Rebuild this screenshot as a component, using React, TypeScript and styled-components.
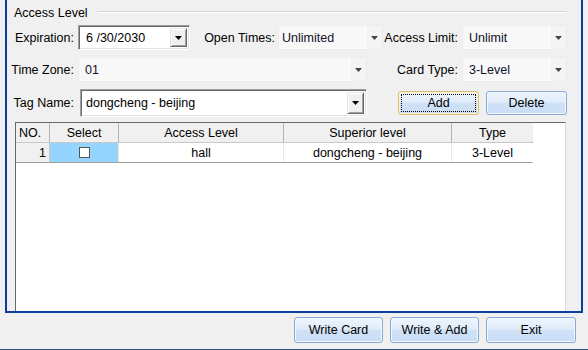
import React from 'react';
import styled, { createGlobalStyle } from 'styled-components';

const Global = createGlobalStyle`
  html, body { margin: 0; padding: 0; background: #f0f0f0; }
  body { font-family: "Liberation Sans", Arial, sans-serif; font-size: 12.5px; color: #000; }
  * { box-sizing: border-box; }
`;

const Window = styled.div`
  width: 588px;
  height: 350px;
  background: #f0f0f0;
  display: flex;
  flex-direction: column;
  border-bottom: 1px solid #2c5a7c;
  overflow: hidden;
`;

const Panel = styled.div`
  margin-left: 5px;
  width: 578px;
  height: 313px;
  border: 2px solid #0f3c9f;
  border-top: none;
  display: flex;
  flex-direction: column;
`;

const GroupHeader = styled.div`
  display: flex;
  align-items: flex-start;
  padding: 6px 15px 0 7px;
  height: 20px;
`;

const GroupTitle = styled.span`
  line-height: 14px;
  white-space: nowrap;
`;

const GroupLine = styled.div`
  flex: 1;
  height: 1px;
  margin: 5px 0 0 10px;
  background: #d5d5d5;
  box-shadow: 0 1px 0 #fff;
`;

const Form = styled.div`
  display: flex;
  flex-direction: column;
  margin-top: 5px;
`;

const Row = styled.div<{ $h: number; $mt?: number }>`
  display: flex;
  align-items: center;
  height: ${p => p.$h}px;
  margin-top: ${p => p.$mt ?? 0}px;
`;

const Label = styled.span<{ $w: number; $gap: number }>`
  width: ${p => p.$w}px;
  margin-right: ${p => p.$gap}px;
  text-align: right;
  white-space: nowrap;
`;

const Sunken = styled.div<{ $w: number; $h: number }>`
  width: ${p => p.$w}px;
  height: ${p => p.$h}px;
  background: #fff;
  border: 1px solid;
  border-color: #a0a0a0 #fff #fff #a0a0a0;
  box-shadow: inset 1px 1px #696969, inset -1px -1px #e3e3e3;
  display: flex;
  align-items: stretch;
  padding: 2px;
`;

const FieldText = styled.span<{ $pad: number }>`
  flex: 1;
  display: flex;
  align-items: center;
  padding-left: ${p => p.$pad}px;
  white-space: nowrap;
`;

const RaisedArrow = styled.span`
  width: 17px;
  background: #f0f0f0;
  border: 1px solid;
  border-color: #e3e3e3 #696969 #696969 #e3e3e3;
  box-shadow: inset 1px 1px #fff, inset -1px -1px #a0a0a0;
  display: flex;
  align-items: center;
  justify-content: center;
`;

const Flat = styled.div<{ $w: number }>`
  width: ${p => p.$w}px;
  height: 25px;
  background: #f8f8f8;
  border: 1px solid #ececec;
  display: flex;
  align-items: stretch;
`;

const FlatText = styled.span<{ $pad: number }>`
  flex: 1;
  display: flex;
  align-items: center;
  padding-left: ${p => p.$pad}px;
  color: #10102a;
  white-space: nowrap;
`;

const FlatArrow = styled.span`
  width: 17px;
  border-left: 1px solid #fdfdfd;
  background: #f4f4f4;
  display: flex;
  align-items: center;
  justify-content: center;
`;

const Button = styled.button<{ $w: number; $focus?: boolean }>`
  width: ${p => p.$w}px;
  height: ${p => (p.$focus !== undefined ? 24 : 26)}px;
  font-family: "Liberation Sans", Arial, sans-serif;
  font-size: 12.5px;
  color: #000;
  border: 1px solid ${p => (p.$focus ? '#dcc07a' : '#86a9d5')};
  border-radius: 3px;
  background: linear-gradient(#eef5fd 0%, #e0ecfa 45%, #cfe1f6 52%, #c9def6 100%);
  box-shadow: inset 0 0 0 1px ${p => (p.$focus ? '#fbf1cf' : '#f4f8fe')};
  padding: 0;
  position: relative;
  cursor: default;
  &::after {
    content: '';
    display: ${p => (p.$focus ? 'block' : 'none')};
    position: absolute;
    inset: 2px;
    border: 1px dotted #000;
  }
`;

const Spacer = styled.div<{ $w: number }>`
  width: ${p => p.$w}px;
  flex: none;
`;

const Grid = styled.div`
  margin: 5px 0 0 8px;
  width: 551px;
  flex: 1;
  background: #fff;
  border-top: 1px solid #696969;
  border-left: 1px solid #696969;
  border-right: 1px solid #dcdcdc;
  display: flex;
  flex-direction: column;
`;

const cols = '34px 69px 165px 168px 81px';

const HeadRow = styled.div`
  display: grid;
  grid-template-columns: ${cols};
  width: 517px;
  height: 20px;
  border-right: 1px solid #646464;
  border-bottom: 1px solid #c8c8c8;
`;

const HeadCell = styled.div<{ $align?: string }>`
  background: #f0f0f0;
  border-right: 1px solid #b4b4b4;
  display: flex;
  align-items: center;
  justify-content: ${p => p.$align ?? 'center'};
  padding: 0 3px;
  white-space: nowrap;
  &:last-child { border-right: none; }
`;

const DataRow = styled.div`
  display: grid;
  grid-template-columns: ${cols};
  width: 517px;
  height: 20px;
  border-bottom: 1px solid #a0a0a0;
  border-right: 1px solid #e6dfc3;
`;

const Cell = styled.div<{ $bg?: string; $align?: string; $line?: string }>`
  background: ${p => p.$bg ?? '#fff'};
  border-right: 1px solid ${p => p.$line ?? '#efe8cc'};
  display: flex;
  align-items: center;
  justify-content: ${p => p.$align ?? 'center'};
  padding: 0 3px;
  white-space: nowrap;
  &:last-child { border-right: none; }
`;

const Check = styled.span`
  width: 11px;
  height: 11px;
  background: #fff;
  border: 1px solid #555;
`;

const BottomBar = styled.div`
  display: flex;
  justify-content: flex-end;
  gap: 7px;
  padding: 4px 12px 0 0;
`;

const Arrow = ({ color = '#000' }: { color?: string }) => (
  <svg width="7" height="4" viewBox="0 0 7 4">
    <path d="M0 0H7L3.5 4Z" fill={color} />
  </svg>
);

export default function App() {
  return (
    <>
      <Global />
      <Window>
        <Panel>
          <GroupHeader>
            <GroupTitle>Access Level</GroupTitle>
            <GroupLine />
          </GroupHeader>
          <Form>
            <Row $h={25}>
              <Label $w={67} $gap={4}>Expiration:</Label>
              <Sunken $w={112} $h={25}>
                <FieldText $pad={5}>6 /30/2030</FieldText>
                <RaisedArrow><Arrow /></RaisedArrow>
              </Sunken>
              <Label $w={85} $gap={3}>Open Times:</Label>
              <Flat $w={105}>
                <FlatText $pad={3}>Unlimited</FlatText>
                <FlatArrow><Arrow color="#444" /></FlatArrow>
              </Flat>
              <Label $w={75} $gap={4}>Access Limit:</Label>
              <Flat $w={105}>
                <FlatText $pad={6}>Unlimit</FlatText>
                <FlatArrow><Arrow color="#444" /></FlatArrow>
              </Flat>
            </Row>
            <Row $h={25} $mt={7}>
              <Label $w={67} $gap={4}>Time Zone:</Label>
              <Flat $w={289}>
                <FlatText $pad={6}>01</FlatText>
                <FlatArrow><Arrow color="#444" /></FlatArrow>
              </Flat>
              <Label $w={91} $gap={4}>Card Type:</Label>
              <Flat $w={105}>
                <FlatText $pad={6}>3-Level</FlatText>
                <FlatArrow><Arrow color="#444" /></FlatArrow>
              </Flat>
            </Row>
            <Row $h={29} $mt={6}>
              <Label $w={67} $gap={6}>Tag Name:</Label>
              <Sunken $w={287} $h={28}>
                <FieldText $pad={3}>dongcheng - beijing</FieldText>
                <RaisedArrow><Arrow /></RaisedArrow>
              </Sunken>
              <Spacer $w={31} />
              <Button $w={81} $focus>Add</Button>
              <Spacer $w={7} />
              <Button $w={81} $focus={false}>Delete</Button>
            </Row>
          </Form>
          <Grid>
            <HeadRow>
              <HeadCell $align="flex-start">NO.</HeadCell>
              <HeadCell>Select</HeadCell>
              <HeadCell>Access Level</HeadCell>
              <HeadCell>Superior level</HeadCell>
              <HeadCell>Type</HeadCell>
            </HeadRow>
            <DataRow>
              <Cell $bg="#f0f0f0" $align="flex-end" $line="#c8c8c8">1</Cell>
              <Cell $bg="#95d5fd"><Check /></Cell>
              <Cell>hall</Cell>
              <Cell>dongcheng - beijing</Cell>
              <Cell>3-Level</Cell>
            </DataRow>
          </Grid>
        </Panel>
        <BottomBar>
          <Button $w={89}>Write Card</Button>
          <Button $w={89}>Write &amp; Add</Button>
          <Button $w={90}>Exit</Button>
        </BottomBar>
      </Window>
    </>
  );
}
